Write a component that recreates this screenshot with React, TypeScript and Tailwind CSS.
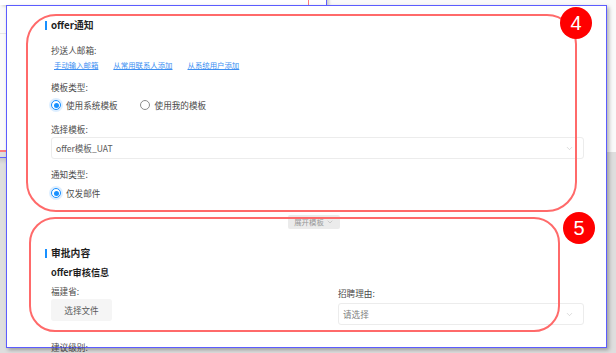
import { ChevronDown } from 'lucide-react';

const Radio = ({ checked, label }: { checked?: boolean; label: string }) => (
  <div className="flex items-center gap-[5px]">
    {checked ? (
      <span className="flex h-[10px] w-[10px] items-center justify-center rounded-full border border-[#1890ff] bg-white shadow-[0_0_0_2px_rgba(24,144,255,0.15)]">
        <span className="h-[5px] w-[5px] rounded-full bg-[#1890ff]" />
      </span>
    ) : (
      <span className="h-[10px] w-[10px] rounded-full border border-[#8c8c8c] bg-white" />
    )}
    <span className="text-[8.6px] leading-[12px] text-[#4a4a4a]">{label}</span>
  </div>
);

const Label = ({ children }: { children: string }) => (
  <div className="h-[12px] text-[8.6px] leading-[12px] text-[#4a4a4a]">{children}</div>
);

const SectionTitle = ({ children }: { children: string }) => (
  <div className="-ml-[6px] flex h-[11px] items-center gap-[4px]">
    <span className="h-[9px] w-[2px] bg-[#1890ff]" />
    <span className="text-[9.8px] font-bold leading-[11px] text-[#1f1f1f]">{children}</span>
  </div>
);

const Select = ({ value, placeholder }: { value?: string; placeholder?: string }) => (
  <div className="flex h-[22px] items-center justify-between rounded-[3px] border border-[#ececec] bg-white pl-[4px] pr-[9px]">
    <span className={`text-[8.6px] leading-[12px] ${value ? 'text-[#5a5a5a]' : 'text-[#808080]'}`}>
      {value || placeholder}
    </span>
    <ChevronDown className="h-[9px] w-[9px] text-[#c0c0c0]" strokeWidth={1.5} />
  </div>
);

const Badge = ({ n, className }: { n: string; className: string }) => (
  <div
    className={`absolute flex h-[32px] w-[32px] items-center justify-center rounded-full bg-[#ff0000] font-['Liberation_Sans',sans-serif] text-[20px] leading-none text-white ${className}`}
  >
    {n}
  </div>
);

export default function App() {
  const links = ['手动输入邮箱', '从常用联系人添加', '从系统用户添加'];

  return (
    <div className="relative h-[353px] w-[616px] overflow-hidden bg-[#dedede] font-['Noto_Sans_CJK_SC',sans-serif]">
      {/* page behind the dialog */}
      <div className="absolute left-0 top-0 h-[152px] w-[616px] bg-[#fafafa]">
        <div className="mt-[33px] h-px w-[6px] bg-[#e6e6e6]" />
      </div>
      <div className="absolute left-0 top-[150px] h-[2px] w-[6px] bg-[#ff7b7b]" />
      <div className="absolute left-0 top-[157px] h-px w-[6px] bg-[#6060ff]" />
      <div className="absolute left-0 top-[158px] h-[6px] w-[6px] bg-gradient-to-b from-[#c8c8c8] to-[#dedede]" />
      <div className="absolute -top-[10px] left-0 h-[15px] w-[327px] border-r border-[#6060ff] bg-white shadow-[2px_1px_3px_rgba(0,0,0,0.2)]">
        <div className="ml-[308px] h-full w-px bg-[#ff7b7b]" />
      </div>

      {/* dialog */}
      <div className="relative ml-[6px] mt-[5px] h-[343px] w-[601px] border border-[#5c5cff] bg-white shadow-[2px_2px_4px_rgba(0,0,0,0.3)]">
        <div className="flex flex-col pl-[44px] pr-[22px]">
          <div className="mt-[14px]">
            <SectionTitle>offer通知</SectionTitle>
          </div>
          <div className="mt-[13px]">
            <Label>抄送人邮箱:</Label>
          </div>
          <div className="mt-[3px] flex h-[12px] items-center gap-[15px] pl-[3px]">
            {links.map((l) => (
              <span key={l} className="text-[7.4px] leading-[12px] text-[#3d8ff2] underline underline-offset-[1px]">
                {l}
              </span>
            ))}
          </div>
          <div className="mt-[10px]">
            <Label>模板类型:</Label>
          </div>
          <div className="mt-[6px] flex h-[12px] items-center gap-[22px]">
            <Radio checked label="使用系统模板" />
            <Radio label="使用我的模板" />
          </div>
          <div className="mt-[12px]">
            <Label>选择模板:</Label>
          </div>
          <div className="mt-[2px]">
            <Select value="offer模板_UAT" />
          </div>
          <div className="mt-[9px]">
            <Label>通知类型:</Label>
          </div>
          <div className="mt-[7px] flex h-[12px] items-center">
            <Radio checked label="仅发邮件" />
          </div>

          <div className="ml-[237px] mt-[16px] flex h-[14px] w-[52px] items-center justify-center gap-[2px] rounded-[2px] bg-[#ebebeb]">
            <span className="text-[7.4px] leading-[10px] text-[#999]">展开模板</span>
            <ChevronDown className="h-[8px] w-[8px] text-[#aaa]" strokeWidth={1.5} />
          </div>

          <div className="mt-[19px]">
            <SectionTitle>审批内容</SectionTitle>
          </div>
          <div className="mt-[7px] h-[12px] text-[9.2px] font-bold leading-[12px] text-[#1f1f1f]">offer审核信息</div>
          <div className="mt-[7px] grid grid-cols-[287px_1fr]">
            <div className="flex flex-col">
              <Label>福建省:</Label>
              <div className="mt-[2px] flex h-[22px] w-[61px] items-center justify-center rounded-[3px] bg-[#f5f5f5] text-[8.6px] text-[#5a5a5a]">
                选择文件
              </div>
            </div>
            <div className="mt-[2px] flex flex-col">
              <Label>招聘理由:</Label>
              <div className="mt-[4px]">
                <Select placeholder="请选择" />
              </div>
            </div>
          </div>
          <div className="mt-[16px]">
            <Label>建议级别:</Label>
          </div>
        </div>
      </div>

      {/* annotations */}
      <div className="absolute left-[26px] top-[14px] h-[198px] w-[551px] rounded-[30px] border-2 border-[#ff6a6a]" />
      <Badge n="4" className="left-[560px] top-[7px]" />
      <div className="absolute left-[29px] top-[217px] h-[115px] w-[531px] rounded-[26px] border-2 border-[#ff6a6a]" />
      <Badge n="5" className="left-[563px] top-[212px]" />
    </div>
  );
}
